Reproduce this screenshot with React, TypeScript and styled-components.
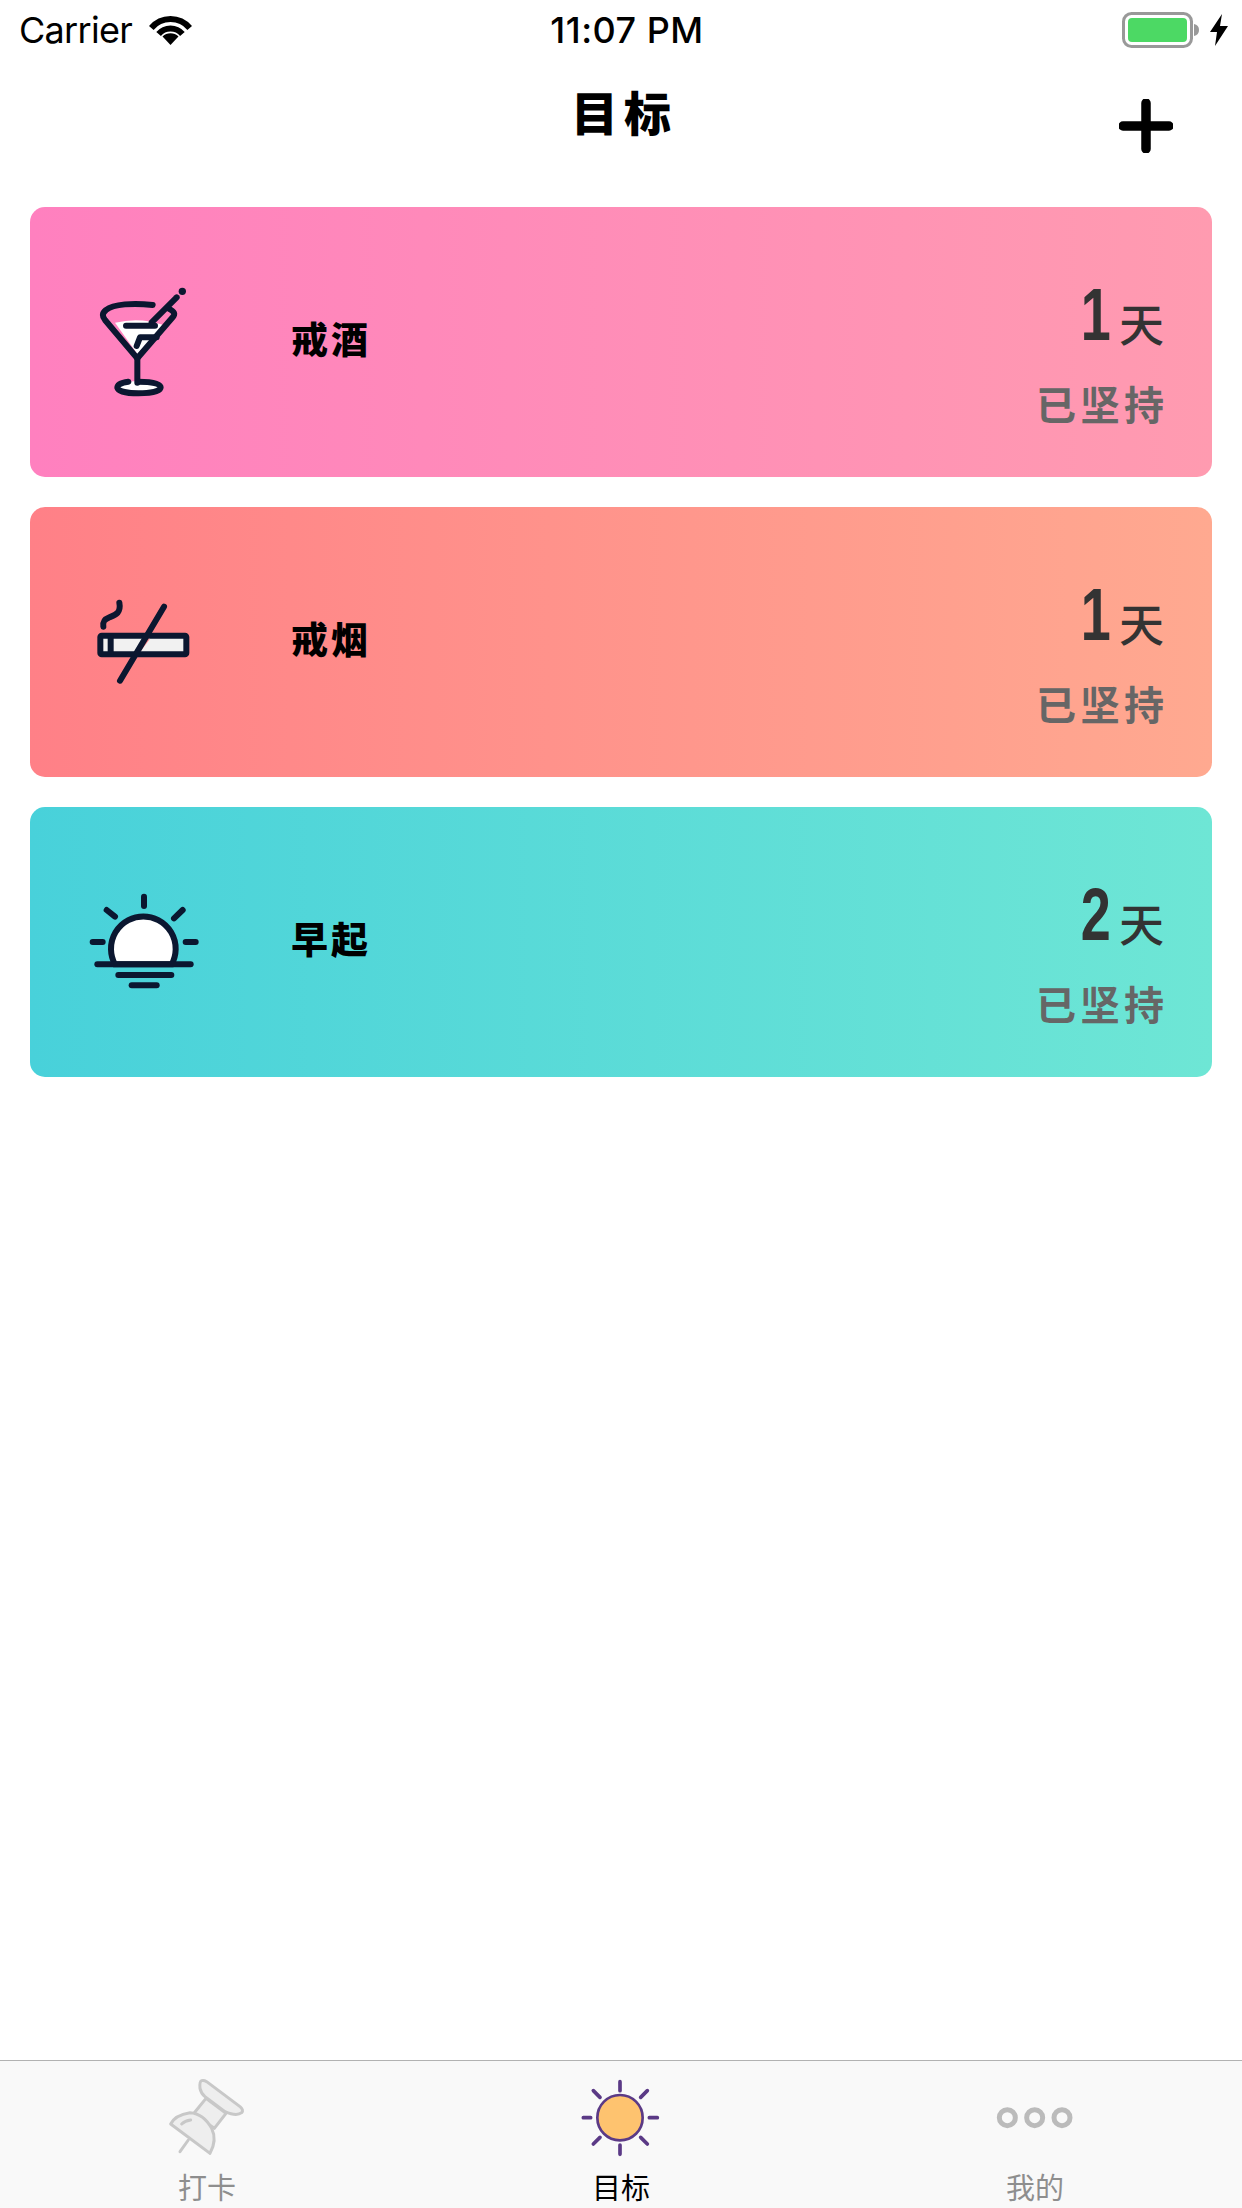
import React from "react"
import styled, { createGlobalStyle } from "styled-components"

const cjk = `"Noto Sans CJK SC", "Noto Sans", sans-serif`
const ink = "#0b1730"

const GlobalStyle = createGlobalStyle`
  html, body {
    margin: 0;
    padding: 0;
    background: #fff;
  }
`

const Screen = styled.div`
  display: flex;
  flex-direction: column;
  width: 1242px;
  height: 2208px;
  overflow: hidden;
  background: #fff;
  font-family: ${cjk};
`

const StatusBar = styled.div`
  display: grid;
  grid-template-columns: 1fr auto 1fr;
  align-items: center;
  height: 60px;
  font-family: Inter, "Liberation Sans", sans-serif;
  font-size: 36px;
  color: #000;
`

const Carrier = styled.div`
  display: flex;
  align-items: center;
  gap: 17px;
  padding-left: 19px;
  letter-spacing: -0.7px;
`

const Clock = styled.div`
  padding-left: 12px;
  font-weight: 500;
  letter-spacing: 0.5px;
`

const Power = styled.div`
  display: flex;
  justify-content: flex-end;
  align-items: center;
  gap: 10px;
  padding-right: 14px;
`

const NavBar = styled.div`
  display: grid;
  grid-template-columns: 1fr auto 1fr;
  align-items: start;
  height: 117px;
`

const Title = styled.div`
  grid-column: 2;
  padding: 18px 0 0 6px;
  font-size: 47px;
  line-height: 66px;
  font-weight: 900;
  letter-spacing: 6px;
  color: #000;
`

const AddButton = styled.div`
  display: flex;
  justify-content: flex-end;
  padding: 39px 69px 0 0;
`

const GoalList = styled.div`
  display: flex;
  flex: 1;
  flex-direction: column;
  gap: 30px;
  padding: 30px;
`

const GoalCard = styled.div<{ $from: string; $to: string }>`
  display: flex;
  align-items: center;
  height: 270px;
  padding: 0 48px 0 54px;
  border-radius: 15px;
  background: linear-gradient(90deg, ${p => p.$from}, ${p => p.$to});
`

const GoalIcon = styled.svg`
  flex: none;
  width: 120px;
  height: 120px;
`

const GoalName = styled.div`
  flex: 1;
  margin: 0 0 8px 87px;
  font-size: 37px;
  line-height: 50px;
  font-weight: 900;
  letter-spacing: 3px;
  color: #000;
`

const Progress = styled.div`
  display: flex;
  flex-direction: column;
  align-items: flex-end;
  gap: 25px;
  padding-top: 21px;
`

const DayCount = styled.div`
  display: flex;
  align-items: baseline;
  gap: 8px;
  height: 76px;
  color: #333;
`

const Digit = styled.span`
  display: inline-block;
  margin-left: -12px;
  transform: translateY(-2px) scaleX(0.72);
  transform-origin: right center;
  font-family: "Liberation Sans", sans-serif;
  font-size: 75px;
  line-height: 76px;
  font-weight: 700;
`

const DayUnit = styled.span`
  font-size: 45px;
  line-height: 72px;
  font-weight: 500;
`

const Kept = styled.div`
  font-size: 40px;
  line-height: 48px;
  font-weight: 700;
  letter-spacing: 4px;
  margin-right: -4px;
  color: #666;
`

const TabBar = styled.div`
  display: grid;
  grid-template-columns: repeat(3, 1fr);
  height: 148px;
  box-sizing: border-box;
  border-top: 1px solid #b2b2b2;
  background: #f9f9f9;
`

const TabItem = styled.div<{ $active?: boolean }>`
  display: flex;
  flex-direction: column;
  align-items: center;
  padding-top: 17px;
  font-size: 29px;
  line-height: 40px;
  color: ${p => (p.$active ? "#000" : "#8e8e8e")};
`

const TabIcon = styled.svg`
  width: 80px;
  height: 80px;
  margin-bottom: 8px;
`

const Wifi = () => (
  <svg width="43" height="29" viewBox="0 0 43 29">
    <path d="M2.3 12A25 25 0 0 1 40.7 12" fill="none" stroke="#000" strokeWidth="6" />
    <path d="M9.6 18A15.5 15.5 0 0 1 33.4 18" fill="none" stroke="#000" strokeWidth="6" />
    <path d="M21.5 29L13.5 20.5A11.5 11.5 0 0 1 29.5 20.5Z" fill="#000" />
  </svg>
)

const Battery = () => (
  <svg width="78" height="36" viewBox="0 0 78 36">
    <rect x="1.5" y="1.5" width="68" height="33" rx="8" fill="#fff" stroke="#999" strokeWidth="3" />
    <rect x="6" y="6" width="59" height="24" rx="4" fill="#4cd964" />
    <path d="M72 12Q77 13 77 18T72 24Z" fill="#999" />
  </svg>
)

const Bolt = () => (
  <svg width="18" height="32" viewBox="0 0 18 32">
    <path d="M12 0L0 18H7L5 32L18 12H10Z" fill="#000" />
  </svg>
)

const Plus = () => (
  <svg width="54" height="54" viewBox="0 0 54 54">
    <path d="M27 4V50M4 27H50" fill="none" stroke="#000" strokeWidth="9.5" strokeLinecap="round" />
  </svg>
)

const Martini = () => (
  <GoalIcon viewBox="192 246 360 360">
    <path d="M285 368Q360 350 430 375L352 462Z" fill="#fff" />
    <ellipse cx="355" cy="562" rx="62" ry="19" fill="#fff" />
    <g fill="none" stroke={ink} strokeWidth="18" strokeLinecap="round" strokeLinejoin="round">
      <path d="M398 315C340 308 280 312 258 330C245 340 247 350 255 360L352 475L458 352C466 342 465 335 445 325" />
      <path d="M395 367L470 292" />
      <path d="M318 377H405" />
      <path d="M410 412H360L350 438" />
      <path d="M352 475V548" />
      <path d="M325 545C300 548 292 556 292 563C295 575 325 580 355 580C390 580 422 574 422 562C422 550 395 545 355 545" />
    </g>
    <circle cx="487" cy="274" r="11" fill={ink} />
  </GoalIcon>
)

const Cigarette = () => (
  <GoalIcon viewBox="192 66 360 360">
    <rect x="241" y="227" width="258" height="56" rx="4" fill="#f1f1f1" stroke={ink} strokeWidth="18" />
    <path d="M272 227V283" stroke={ink} strokeWidth="18" />
    <path d="M345 274L372 236H390L362 274Z" fill="#ff8087" />
    <path d="M432 140L300 362" stroke={ink} strokeWidth="18" strokeLinecap="round" />
    <path d="M298 128C304 160 285 165 268 172C252 178 248 186 250 200" fill="none" stroke={ink} strokeWidth="18" strokeLinecap="round" />
  </GoalIcon>
)

const Sunrise = () => (
  <GoalIcon viewBox="192 66 360 360">
    <path d="M285 313A97 97 0 1 1 455 313Z" fill="#fff" stroke={ink} strokeWidth="18" />
    <g fill="none" stroke={ink} strokeWidth="18" strokeLinecap="round">
      <path d="M232 313H512" />
      <path d="M295 345H454" />
      <path d="M335 376H410" />
      <path d="M372 110V138" />
      <path d="M260 150L285 170" />
      <path d="M488 150L462 175" />
      <path d="M218 246H248" />
      <path d="M497 246H527" />
    </g>
  </GoalIcon>
)

const Pin = () => (
  <TabIcon viewBox="201 84 240 240">
    <g fill="#eee" stroke="#c8c8c8" strokeWidth="9" strokeLinejoin="round" strokeLinecap="round">
      <path d="M318 145L280 192L343 235L378 190Z" />
      <path d="M305 92Q298 95 300 115Q303 130 315 140L375 185Q410 200 425 188Q432 180 420 170L320 95Q312 90 305 92Z" />
      <path d="M212 222Q225 195 270 188Q310 190 335 235Q352 270 330 310Z" />
      <path d="M245 222Q255 212 272 210" fill="none" />
      <path d="M265 270L240 305" fill="none" />
    </g>
  </TabIcon>
)

const Sun = () => (
  <TabIcon viewBox="183 84 240 240">
    <circle cx="300" cy="203" r="68" fill="#fec36f" stroke="#5b3a86" strokeWidth="8" />
    <path
      d="M300 95V122M300 285V313M190 203H212M388 203H412M220 122L240 142M382 122L362 142M220 282L240 262M382 282L362 262"
      fill="none"
      stroke="#5b3a86"
      strokeWidth="11"
      strokeLinecap="round"
    />
  </TabIcon>
)

const Dots = () => (
  <TabIcon viewBox="135 84 240 240">
    <g fill="none" stroke="#bbb" strokeWidth="15">
      <circle cx="172" cy="203" r="24" />
      <circle cx="254" cy="203" r="24" />
      <circle cx="336" cy="203" r="24" />
    </g>
  </TabIcon>
)

const goals = [
  { name: "戒酒", days: 1, from: "#ff80bf", to: "#ff9bb0", Icon: Martini },
  { name: "戒烟", days: 1, from: "#ff8087", to: "#ffa990", Icon: Cigarette },
  { name: "早起", days: 2, from: "#48d1da", to: "#6ee6d5", Icon: Sunrise },
]

const tabs = [
  { label: "打卡", Icon: Pin },
  { label: "目标", Icon: Sun, active: true },
  { label: "我的", Icon: Dots },
]

export default function App() {
  return (
    <Screen>
      <GlobalStyle />
      <StatusBar>
        <Carrier>
          Carrier
          <Wifi />
        </Carrier>
        <Clock>11:07 PM</Clock>
        <Power>
          <Battery />
          <Bolt />
        </Power>
      </StatusBar>
      <NavBar>
        <Title>目标</Title>
        <AddButton>
          <Plus />
        </AddButton>
      </NavBar>
      <GoalList>
        {goals.map(({ name, days, from, to, Icon }) => (
          <GoalCard key={name} $from={from} $to={to}>
            <Icon />
            <GoalName>{name}</GoalName>
            <Progress>
              <DayCount>
                <Digit>{days}</Digit>
                <DayUnit>天</DayUnit>
              </DayCount>
              <Kept>已坚持</Kept>
            </Progress>
          </GoalCard>
        ))}
      </GoalList>
      <TabBar>
        {tabs.map(({ label, Icon, active }) => (
          <TabItem key={label} $active={active}>
            <Icon />
            {label}
          </TabItem>
        ))}
      </TabBar>
    </Screen>
  )
}
